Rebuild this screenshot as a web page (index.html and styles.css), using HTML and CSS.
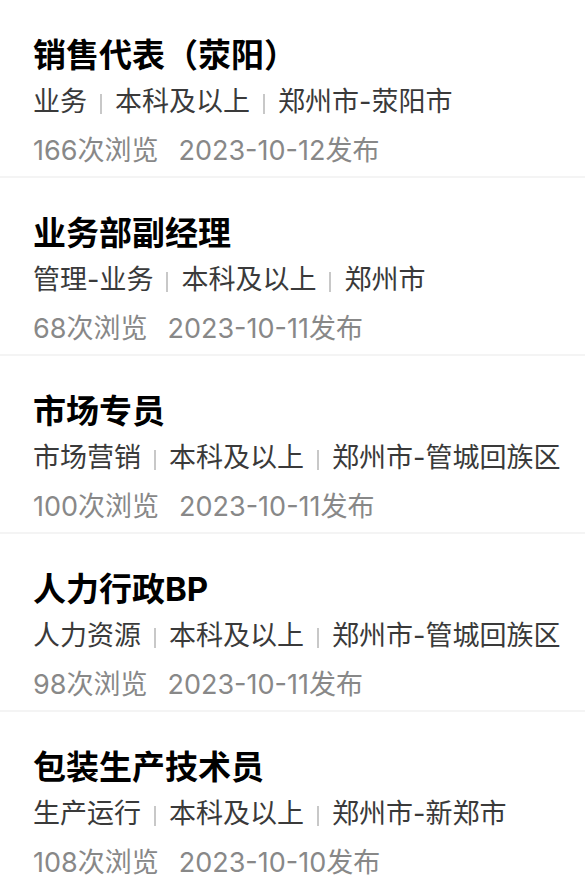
FILE: index.html
```html
<!DOCTYPE html>
<html lang="zh-CN">
<head>
<meta charset="utf-8">
<title>职位列表</title>
<link rel="stylesheet" href="styles.css">
</head>
<body>
<ul class="job-list">
  <li class="job">
    <div class="job-title">销售代表（荥阳）</div>
    <div class="job-tags"><span>业务</span><i class="sep"></i><span>本科及以上</span><i class="sep"></i><span>郑州市-荥阳市</span></div>
    <div class="job-meta"><span>166次浏览</span><span>2023-10-12发布</span></div>
  </li>
  <li class="job">
    <div class="job-title">业务部副经理</div>
    <div class="job-tags"><span>管理-业务</span><i class="sep"></i><span>本科及以上</span><i class="sep"></i><span>郑州市</span></div>
    <div class="job-meta"><span>68次浏览</span><span>2023-10-11发布</span></div>
  </li>
  <li class="job">
    <div class="job-title">市场专员</div>
    <div class="job-tags"><span>市场营销</span><i class="sep"></i><span>本科及以上</span><i class="sep"></i><span>郑州市-管城回族区</span></div>
    <div class="job-meta"><span>100次浏览</span><span>2023-10-11发布</span></div>
  </li>
  <li class="job">
    <div class="job-title">人力行政BP</div>
    <div class="job-tags"><span>人力资源</span><i class="sep"></i><span>本科及以上</span><i class="sep"></i><span>郑州市-管城回族区</span></div>
    <div class="job-meta"><span>98次浏览</span><span>2023-10-11发布</span></div>
  </li>
  <li class="job">
    <div class="job-title">包装生产技术员</div>
    <div class="job-tags"><span>生产运行</span><i class="sep"></i><span>本科及以上</span><i class="sep"></i><span>郑州市-新郑市</span></div>
    <div class="job-meta"><span>108次浏览</span><span>2023-10-10发布</span></div>
  </li>
</ul>
</body>
</html>
```

FILE: styles.css
```css
* { box-sizing: border-box; }
html, body {
  margin: 0;
  padding: 0;
  background: #ffffff;
}
body {
  font-family: Inter, "Noto Sans CJK SC", sans-serif;
  overflow: hidden;
}
.job-list {
  list-style: none;
  margin: 0;
  padding: 0;
}
.job {
  height: 178px;
  padding: 35px 0 0 33px;
  border-bottom: 2px solid #f4f4f4;
}
.job-title {
  font-size: 33px;
  font-weight: 700;
  line-height: 40px;
  color: #000000;
  white-space: nowrap;
}
.job-tags {
  display: flex;
  align-items: center;
  margin-top: 9px;
  font-size: 27px;
  line-height: 36px;
  color: #3a3a3a;
  white-space: nowrap;
}
.sep {
  display: block;
  width: 2px;
  height: 20px;
  margin: 4px 13px 0 13px;
  background: #c8c8c8;
}
.job-meta {
  display: flex;
  gap: 20px;
  margin-top: 13px;
  font-size: 27px;
  line-height: 36px;
  color: #888888;
  white-space: nowrap;
}
```
